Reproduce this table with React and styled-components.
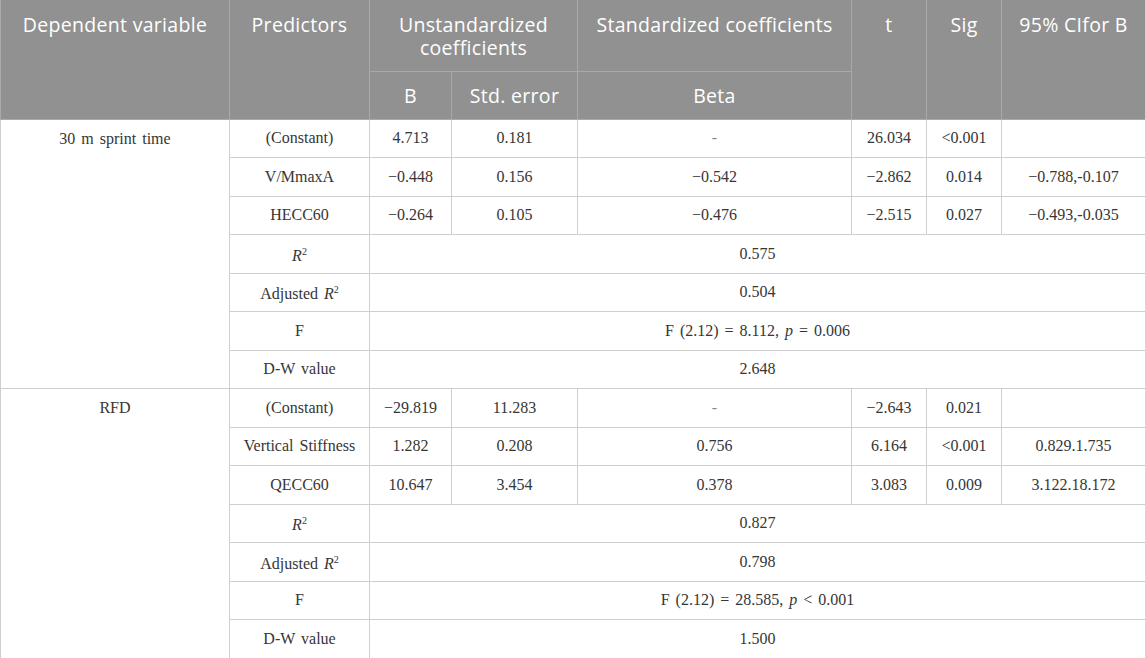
import React from "react";
import styled, { createGlobalStyle } from "styled-components";

const Global = createGlobalStyle`
  html, body { margin: 0; padding: 0; background: #ffffff; }
  #root { width: 1145px; }
`;

const Table = styled.table`
  width: 1145px;
  table-layout: fixed;
  border-collapse: collapse;
  font-family: "Liberation Serif", "Times New Roman", serif;
`;

const HeadRow = styled.tr`
  height: ${(p) => p.$h}px;
  background: #919191;
`;

const HeadCell = styled.th`
  font-family: "Open Sans", "Noto Sans", sans-serif;
  font-weight: 400;
  font-size: 19.5px;
  letter-spacing: 0.3px;
  line-height: 23px;
  color: #ffffff;
  text-align: center;
  vertical-align: ${(p) => (p.$middle ? "middle" : "top")};
  padding: ${(p) => (p.$middle ? "0 4px" : "13px 4px 0")};
  border: 1px solid #a9a9a9;
  border-top: none;
`;

const BodyRow = styled.tr`
  height: 38.5px;
`;

const Cell = styled.td`
  font-size: 16px;
  line-height: 20px;
  color: #363636;
  text-align: center;
  vertical-align: ${(p) => (p.$top ? "top" : "middle")};
  padding: ${(p) => (p.$top ? "9px 6px 0" : "0 6px")};
  border: 1px solid #cfcfcf;
  word-spacing: 2px;
`;

const Dash = styled.span`
  color: #888888;
`;

const Sup = styled.sup`
  font-size: 10px;
  vertical-align: 6px;
  font-style: normal;
`;

const widths = [229, 140, 82, 126, 274, 75, 75, 144];

const R2 = ({ adj }) => (
  <>
    {adj ? "Adjusted " : ""}
    <i>R</i>
    <Sup>2</Sup>
  </>
);

const groups = [
  {
    name: "30 m sprint time",
    rows: [
      ["(Constant)", "4.713", "0.181", "-", "26.034", "<0.001", ""],
      ["V/MmaxA", "−0.448", "0.156", "−0.542", "−2.862", "0.014", "−0.788,-0.107"],
      ["HECC60", "−0.264", "0.105", "−0.476", "−2.515", "0.027", "−0.493,-0.035"],
    ],
    r2: "0.575",
    adj: "0.504",
    f: <>F (2.12) = 8.112, <i>p</i> = 0.006</>,
    dw: "2.648",
  },
  {
    name: "RFD",
    rows: [
      ["(Constant)", "−29.819", "11.283", "-", "−2.643", "0.021", ""],
      ["Vertical Stiffness", "1.282", "0.208", "0.756", "6.164", "<0.001", "0.829.1.735"],
      ["QECC60", "10.647", "3.454", "0.378", "3.083", "0.009", "3.122.18.172"],
    ],
    r2: "0.827",
    adj: "0.798",
    f: <>F (2.12) = 28.585, <i>p</i> &lt; 0.001</>,
    dw: "1.500",
  },
];

function Group({ g }) {
  const summary = [
    [<R2 key="r" />, g.r2],
    [<R2 key="a" adj />, g.adj],
    ["F", g.f],
    ["D-W value", g.dw],
  ];
  return (
    <>
      {g.rows.map((r, i) => (
        <BodyRow key={i}>
          {i === 0 && (
            <Cell $top rowSpan={7}>
              {g.name}
            </Cell>
          )}
          {r.map((v, j) => (
            <Cell key={j}>{v === "-" ? <Dash>-</Dash> : v}</Cell>
          ))}
        </BodyRow>
      ))}
      {summary.map(([label, value], i) => (
        <BodyRow key={"s" + i}>
          <Cell>{label}</Cell>
          <Cell colSpan={6}>{value}</Cell>
        </BodyRow>
      ))}
    </>
  );
}

export default function App() {
  return (
    <>
      <Global />
      <Table>
        <colgroup>
          {widths.map((w, i) => (
            <col key={i} style={{ width: w }} />
          ))}
        </colgroup>
        <thead>
          <HeadRow $h={71}>
            <HeadCell rowSpan={2}>Dependent variable</HeadCell>
            <HeadCell rowSpan={2}>Predictors</HeadCell>
            <HeadCell colSpan={2}>Unstandardized coefficients</HeadCell>
            <HeadCell>Standardized coefficients</HeadCell>
            <HeadCell rowSpan={2}>t</HeadCell>
            <HeadCell rowSpan={2}>Sig</HeadCell>
            <HeadCell rowSpan={2}>95% CIfor B</HeadCell>
          </HeadRow>
          <HeadRow $h={48}>
            <HeadCell $middle>B</HeadCell>
            <HeadCell $middle>Std. error</HeadCell>
            <HeadCell $middle>Beta</HeadCell>
          </HeadRow>
        </thead>
        <tbody>
          {groups.map((g, i) => (
            <Group key={i} g={g} />
          ))}
        </tbody>
      </Table>
    </>
  );
}
